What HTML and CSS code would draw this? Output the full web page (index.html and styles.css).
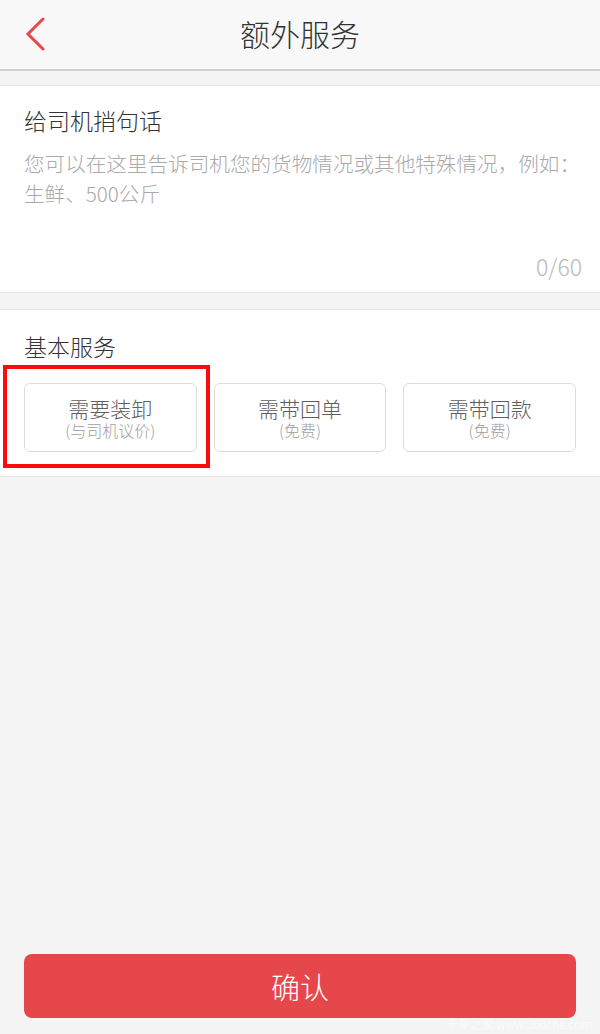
FILE: index.html
```html
<!DOCTYPE html>
<html lang="zh">
<head>
<meta charset="utf-8">
<title>额外服务</title>
<link rel="stylesheet" href="styles.css">
</head>
<body>
<div class="page">
  <header class="topbar">
    <svg class="back" width="24" height="36" viewBox="0 0 24 36">
      <polyline points="19,2 4,17 19,32" fill="none" stroke="#e8474b" stroke-width="3" stroke-linecap="round" stroke-linejoin="miter"/>
    </svg>
    <h1 class="title">额外服务</h1>
  </header>

  <section class="card note">
    <div class="card-title">给司机捎句话</div>
    <p class="placeholder">您可以在这里告诉司机您的货物情况或其他特殊情况，例如：生鲜、500公斤</p>
    <div class="counter">0/60</div>
  </section>

  <section class="card services">
    <div class="card-title">基本服务</div>
    <div class="options">
      <div class="option">
        <span class="opt-main">需要装卸</span>
        <span class="opt-sub">(与司机议价)</span>
      </div>
      <div class="option">
        <span class="opt-main">需带回单</span>
        <span class="opt-sub">(免费)</span>
      </div>
      <div class="option">
        <span class="opt-main">需带回款</span>
        <span class="opt-sub">(免费)</span>
      </div>
    </div>
    <div class="highlight"></div>
  </section>

  <div class="spacer"></div>

  <footer class="footer">
    <button class="confirm">确认</button>
  </footer>
  <div class="watermark">卡车之家 www.360che.com</div>
</div>
</body>
</html>
```

FILE: styles.css
```css
* { box-sizing: border-box; }

html, body {
  margin: 0;
  padding: 0;
}

body {
  background: #f4f4f4;
  font-family: "Noto Sans CJK SC", "Noto Sans", sans-serif;
  font-weight: 300;
  color: #333;
}

.page {
  position: relative;
  width: 600px;
  height: 1034px;
  display: flex;
  flex-direction: column;
  overflow: hidden;
}

.topbar {
  position: relative;
  height: 71px;
  flex: none;
  background: #f8f8f8;
  border-bottom: 2px solid #d0d0d0;
  display: flex;
  align-items: center;
  justify-content: center;
  box-shadow: inset 0 -1px 0 #ffffff;
}

.back {
  position: absolute;
  left: 24px;
  top: 17px;
}

.title {
  margin: 0;
  font-size: 30px;
  font-weight: 300;
  line-height: 40px;
  color: #333;
  margin-top: -4px;
}

.card {
  position: relative;
  background: #fff;
  border-top: 1px solid #e6e6e6;
  border-bottom: 1px solid #e6e6e6;
  padding: 0 24px;
  flex: none;
}

.note {
  margin-top: 14px;
  padding-top: 18px;
  padding-bottom: 11px;
}

.card-title {
  font-size: 23px;
  line-height: 32px;
  color: #333;
}

.placeholder {
  margin: 12px -8px 0 0;
  font-size: 20.6px;
  line-height: 30px;
  color: #a9a9a9;
}

.counter {
  margin-top: 43px;
  margin-right: -6px;
  text-align: right;
  font-size: 23px;
  line-height: 30px;
  color: #b8b8b8;
}

.services {
  margin-top: 16px;
  padding-top: 20px;
  padding-bottom: 24px;
}

.options {
  margin-top: 21px;
  display: grid;
  grid-template-columns: repeat(3, 1fr);
  column-gap: 17px;
}

.option {
  height: 69px;
  border: 1px solid #dcdcdc;
  border-radius: 6px;
  display: flex;
  flex-direction: column;
  align-items: center;
  justify-content: center;
}

.opt-main {
  font-size: 21px;
  line-height: 25px;
  color: #5e5e5e;
}

.opt-sub {
  font-size: 16px;
  line-height: 19px;
  color: #a0a0a0;
}

.highlight {
  position: absolute;
  left: 3px;
  top: 55px;
  width: 207px;
  height: 103px;
  border: 4px solid #ff0a0a;
  pointer-events: none;
}

.spacer {
  flex: 1;
}

.footer {
  flex: none;
  padding: 0 24px 16px;
}

.confirm {
  display: block;
  width: 100%;
  height: 64px;
  border: none;
  border-radius: 8px;
  background: #e6474b;
  color: #fff;
  font-family: "Noto Sans CJK SC", "Noto Sans", sans-serif;
  font-weight: 300;
  font-size: 29px;
  line-height: 64px;
  padding: 0;
}

.watermark {
  position: absolute;
  right: 8px;
  bottom: 2px;
  font-size: 12px;
  line-height: 16px;
  color: rgba(255, 255, 255, 0.9);
  font-family: "Noto Sans CJK SC", "Liberation Sans", sans-serif;
}
```
